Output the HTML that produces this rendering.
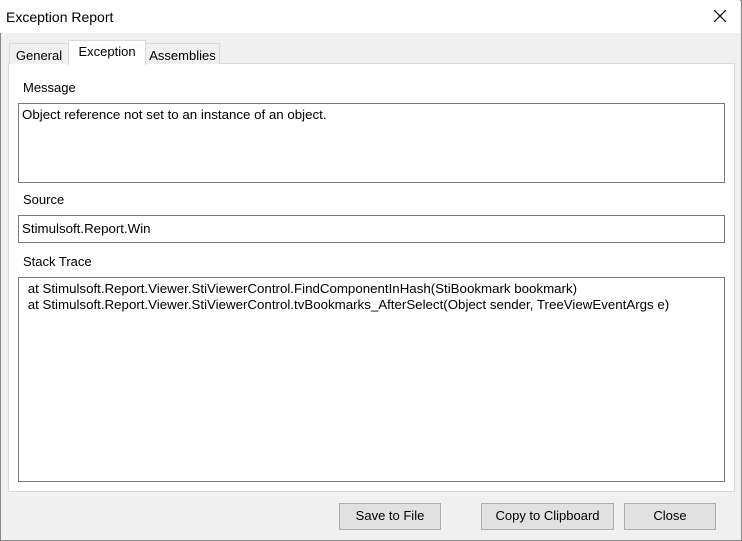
<!DOCTYPE html>
<html><head><style>
*{margin:0;padding:0;box-sizing:border-box}
body{width:742px;height:541px;overflow:hidden;background:#f0f0f0;font-family:"Liberation Sans",sans-serif;font-size:12px;color:#000;position:relative}
.win{position:absolute;left:0;top:0;width:742px;height:541px;border:1px solid #888;}
.title{position:absolute;left:0;top:0;width:740px;height:33px;background:#fff}
.title span{position:absolute;left:6px;top:9px;font-size:14px}
.x{position:absolute;left:712px;top:8px}
.a{position:absolute}
.tab{position:absolute;border:1px solid #d9d9d9;border-bottom:none;background:#f0f0f0;text-align:center;padding-top:4px}
.panel{position:absolute;left:8px;top:63px;width:727px;height:429px;background:#fff;border:1px solid #d9d9d9}
.box{position:absolute;background:#fff;border:1px solid #7a7a7a;padding:3px 3px;font-size:13.3px}
.btn{position:absolute;background:#e1e1e1;border:1px solid #adadad;text-align:center;line-height:24px;font-size:13px}
</style></head><body>
<div class="win"></div>
<div class="title"><span>Exception Report</span>
<svg class="x" width="16" height="16" viewBox="0 0 16 16"><path d="M2 2L14 14M14 2L2 14" stroke="#000" stroke-width="1.2"/></svg></div>
<div class="panel"></div>
<div class="tab" style="left:9px;top:43px;width:60px;height:21px;font-size:13px">General</div>
<div class="tab" style="left:145px;top:43px;width:75px;height:21px;font-size:13px">Assemblies</div>
<div class="tab" style="left:68px;top:40px;width:78px;height:25px;background:#fff;border-color:#d9d9d9;font-size:13px;padding-top:3px">Exception</div>
<div class="a" style="left:23px;top:80px;font-size:13px">Message</div>
<div class="box" style="left:18px;top:103px;width:707px;height:80px">Object reference not set to an instance of an object.</div>
<div class="a" style="left:23px;top:192px;font-size:13px">Source</div>
<div class="box" style="left:18px;top:215px;width:707px;height:28px;padding-top:5px">Stimulsoft.Report.Win</div>
<div class="a" style="left:23px;top:254px;font-size:13px">Stack Trace</div>
<div class="box" style="left:18px;top:277px;width:707px;height:205px;padding:3px 0 0 5px;line-height:16px;white-space:pre"> at Stimulsoft.Report.Viewer.StiViewerControl.FindComponentInHash(StiBookmark bookmark)
 at Stimulsoft.Report.Viewer.StiViewerControl.tvBookmarks_AfterSelect(Object sender, TreeViewEventArgs e)</div>
<div class="btn" style="left:339px;top:503px;width:102px;height:27px">Save to File</div>
<div class="btn" style="left:481px;top:503px;width:133px;height:27px">Copy to Clipboard</div>
<div class="btn" style="left:624px;top:503px;width:92px;height:27px">Close</div>
</body></html>
